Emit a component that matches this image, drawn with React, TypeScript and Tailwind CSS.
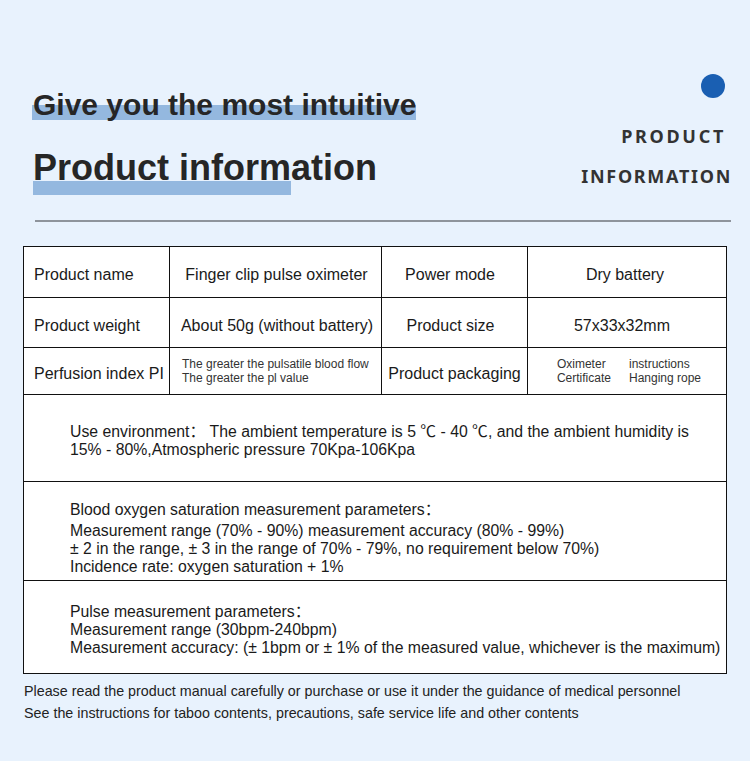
const cell = "border-r border-b border-[#111] flex items-center";

export default function App() {
  return (
    <div className="w-[750px] h-[761px] bg-[#e8f2fd] overflow-hidden font-['Liberation_Sans','Noto_Sans_CJK_SC',Arial,sans-serif] text-[#1a1a1a]">
      <div className="flex justify-between h-[220px]">
        <div className="flex flex-col items-start pl-[32px] pt-[90px]">
          <h1 className="inline-block pl-[1px] text-[30px] leading-[30px] font-bold text-[#262626] bg-[linear-gradient(to_bottom,transparent_15px,#94b8df_15px)]">
            Give you the most intuitive
          </h1>
          <h2 className="mt-[30px] pl-[1px] text-[36px] leading-[36px] font-bold text-[#262626] whitespace-nowrap">
            <span className="inline-block pb-[9px] bg-[linear-gradient(to_bottom,transparent_31px,#94b8df_31px)]">Product inform</span>ation
          </h2>
        </div>
        <div className="flex flex-col items-end pr-[18px] pt-[74px] font-['Noto_Sans',sans-serif] font-bold text-[18px] leading-[18px] text-[#333]">
          <div className="w-[24px] h-[24px] rounded-full bg-[#1a5fb2] mr-[7px]" />
          <div className="mt-[29px] mr-[6px] tracking-[2.7px]">PRODUCT</div>
          <div className="mt-[22px] tracking-[1.7px]">INFORMATION</div>
        </div>
      </div>
      <div className="ml-[35px] w-[696px] h-[2px] bg-[#8e949c]" />

      <div className="mt-[24px] ml-[23px] w-[704px] bg-white border-l border-t border-[#111] grid grid-cols-[146px_212px_146px_199px] text-[16px] leading-[18px]">
        <div className={`${cell} h-[51px] pl-[10px] pt-[6px]`}>Product name</div>
        <div className={`${cell} h-[51px] justify-center pt-[6px] pl-[2px]`}>Finger clip pulse oximeter</div>
        <div className={`${cell} h-[51px] justify-center pt-[6px] pr-[9px]`}>Power mode</div>
        <div className={`${cell} h-[51px] justify-center pt-[6px] pr-[4px]`}>Dry battery</div>

        <div className={`${cell} h-[50px] pl-[10px] pt-[6px]`}>Product weight</div>
        <div className={`${cell} h-[50px] justify-center pt-[6px] pl-[3px]`}>About 50g (without battery)</div>
        <div className={`${cell} h-[50px] justify-center pt-[6px] pr-[8px]`}>Product size</div>
        <div className={`${cell} h-[50px] justify-center pt-[6px] pr-[10px]`}>57x33x32mm</div>

        <div className={`${cell} h-[47px] pl-[10px] pt-[6px] whitespace-nowrap`}>Perfusion index PI</div>
        <div className={`${cell} h-[47px] pl-[12px] text-[12px] leading-[14px] text-[#333]`}>
          <div>
            The greater the pulsatile blood flow
            <br />
            The greater the pl value
          </div>
        </div>
        <div className={`${cell} h-[47px] justify-center pt-[6px] whitespace-nowrap`}>Product packaging</div>
        <div className={`${cell} h-[47px] justify-center gap-[18px] pl-[4px] text-[12px] leading-[14px] text-[#333]`}>
          <div>
            Oximeter
            <br />
            Certificate
          </div>
          <div>
            instructions
            <br />
            Hanging rope
          </div>
        </div>

        <div className="col-span-4 h-[87px] border-r border-b border-[#111] pl-[46px] pt-[28px] text-[15.8px]">
          Use environment：&nbsp;The ambient temperature is 5 ℃ - 40 ℃, and the ambient humidity is
          <br />
          15% - 80%,Atmospheric pressure 70Kpa-106Kpa
        </div>

        <div className="col-span-4 h-[99px] border-r border-b border-[#111] pl-[46px] pt-[19px] text-[15.8px]">
          <div className="mb-[3px]">Blood oxygen saturation measurement parameters：</div>
          <div>Measurement range (70% - 90%) measurement accuracy (80% - 99%)</div>
          <div>± 2 in the range, ± 3 in the range of 70% - 79%, no requirement below 70%)</div>
          <div>Incidence rate: oxygen saturation + 1%</div>
        </div>

        <div className="col-span-4 h-[93px] border-r border-b border-[#111] pl-[46px] pt-[22px] whitespace-nowrap text-[15.8px]">
          <div>Pulse measurement parameters：</div>
          <div>Measurement range (30bpm-240bpm)</div>
          <div>Measurement accuracy: (± 1bpm or ± 1% of the measured value, whichever is the maximum)</div>
        </div>
      </div>

      <div className="mt-[6px] pl-[24px] text-[14.3px] leading-[22px] text-[#222]">
        <div>Please read the product manual carefully or purchase or use it under the guidance of medical personnel</div>
        <div>See the instructions for taboo contents, precautions, safe service life and other contents</div>
      </div>
    </div>
  );
}
